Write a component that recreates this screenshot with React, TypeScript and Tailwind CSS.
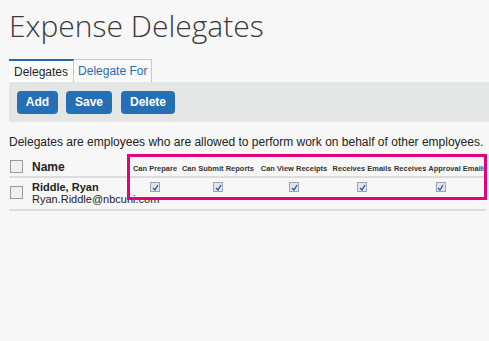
export default function App() {
  const cols = [
    { label: 'Can Prepare', w: 'w-[50px]' },
    { label: 'Can Submit Reports', w: 'w-[76px]' },
    { label: 'Can View Receipts', w: 'w-[76px]' },
    { label: 'Receives Emails', w: 'w-[60px]' },
    { label: 'Receives Approval Emails', w: 'w-[97px]' },
  ]

  return (
    <main className="h-[341px] w-[489px] overflow-hidden bg-[#f7f7f7] pl-[9px] font-['Liberation_Sans',Arial,sans-serif] text-[#333]">
      <h1 className="pt-[6px] font-['Open_Sans',sans-serif] text-[30px] font-light leading-[40px] text-[#3a3a3a]">Expense Delegates</h1>

      <div className="mt-[13px] flex h-[23px] items-end text-[12px]">
        <div className="flex h-[23px] items-center border-t-2 border-r border-[#2466a8] border-r-[#c8c8c8] bg-white px-[5px] text-[#222]">Delegates</div>
        <div className="flex h-[23px] items-center border-t border-r border-[#c8c8c8] bg-[#f9f9f9] px-[4px] text-[#2a6aa8]">Delegate For</div>
      </div>

      <div className="flex h-[40px] items-center gap-[8px] bg-[#e4e5e5] pl-[8px]">
        <button type="button" className="h-[23px] w-[41px] rounded-[4px] bg-[#2470b6] text-[12px] font-bold text-white">Add</button>
        <button type="button" className="h-[23px] w-[46px] rounded-[4px] bg-[#2470b6] text-[12px] font-bold text-white">Save</button>
        <button type="button" className="ml-[1px] h-[23px] w-[54px] rounded-[4px] bg-[#2470b6] text-[12px] font-bold text-white">Delete</button>
      </div>

      <p className="mt-[13px] text-[12px] leading-[14px] text-[#222]">Delegates are employees who are allowed to perform work on behalf of other employees.</p>

      <div className="relative mt-[8px] mr-[3px]">
        <div className="flex h-[21px] items-center border-b-2 border-[#dcdcdc]">
          <span className="ml-[1px] h-[13px] w-[13px] shrink-0 border border-[#999] bg-[#f0f0f0]" />
          <span className="ml-[9px] w-[98px] shrink-0 text-[12px] font-bold text-[#222]">Name</span>
          <div className="flex shrink-0 items-center pt-[4px]">
            {cols.map((c) => (
              <span key={c.label} className={`${c.w} shrink-0 text-center text-[7.5px] font-bold whitespace-nowrap text-[#333]`}>{c.label}</span>
            ))}
          </div>
        </div>
        <div className="flex h-[33px] items-start border-b-2 border-[#dcdcdc] pt-[3px]">
          <span className="mt-[5px] ml-[1px] h-[13px] w-[13px] shrink-0 border border-[#999] bg-[#f0f0f0]" />
          <div className="ml-[9px] w-[98px] shrink-0 leading-[12px]">
            <div className="text-[11px] font-bold text-[#222]">Riddle, Ryan</div>
            <div className="text-[11px] whitespace-nowrap text-[#222]">Ryan.Riddle@nbcuni.com</div>
          </div>
          <div className="flex shrink-0">
            {cols.map((c) => (
              <span key={c.label} className={`${c.w} flex shrink-0 justify-center pt-[1px]`}>
                <span className="flex h-[10px] w-[10px] items-center justify-center border border-[#9aa3b4] bg-[#dfe4ee]">
                  <svg width="7" height="7" viewBox="0 0 7 7">
                    <path d="M1 4 L3 6 L6 1" fill="none" stroke="#2c4a8c" strokeWidth="1.2" />
                  </svg>
                </span>
              </span>
            ))}
          </div>
        </div>
        <div className="absolute top-[-3px] left-[118px] h-[46px] w-[360px] border-[3px] border-[#e6007e]" />
      </div>
    </main>
  )
}
